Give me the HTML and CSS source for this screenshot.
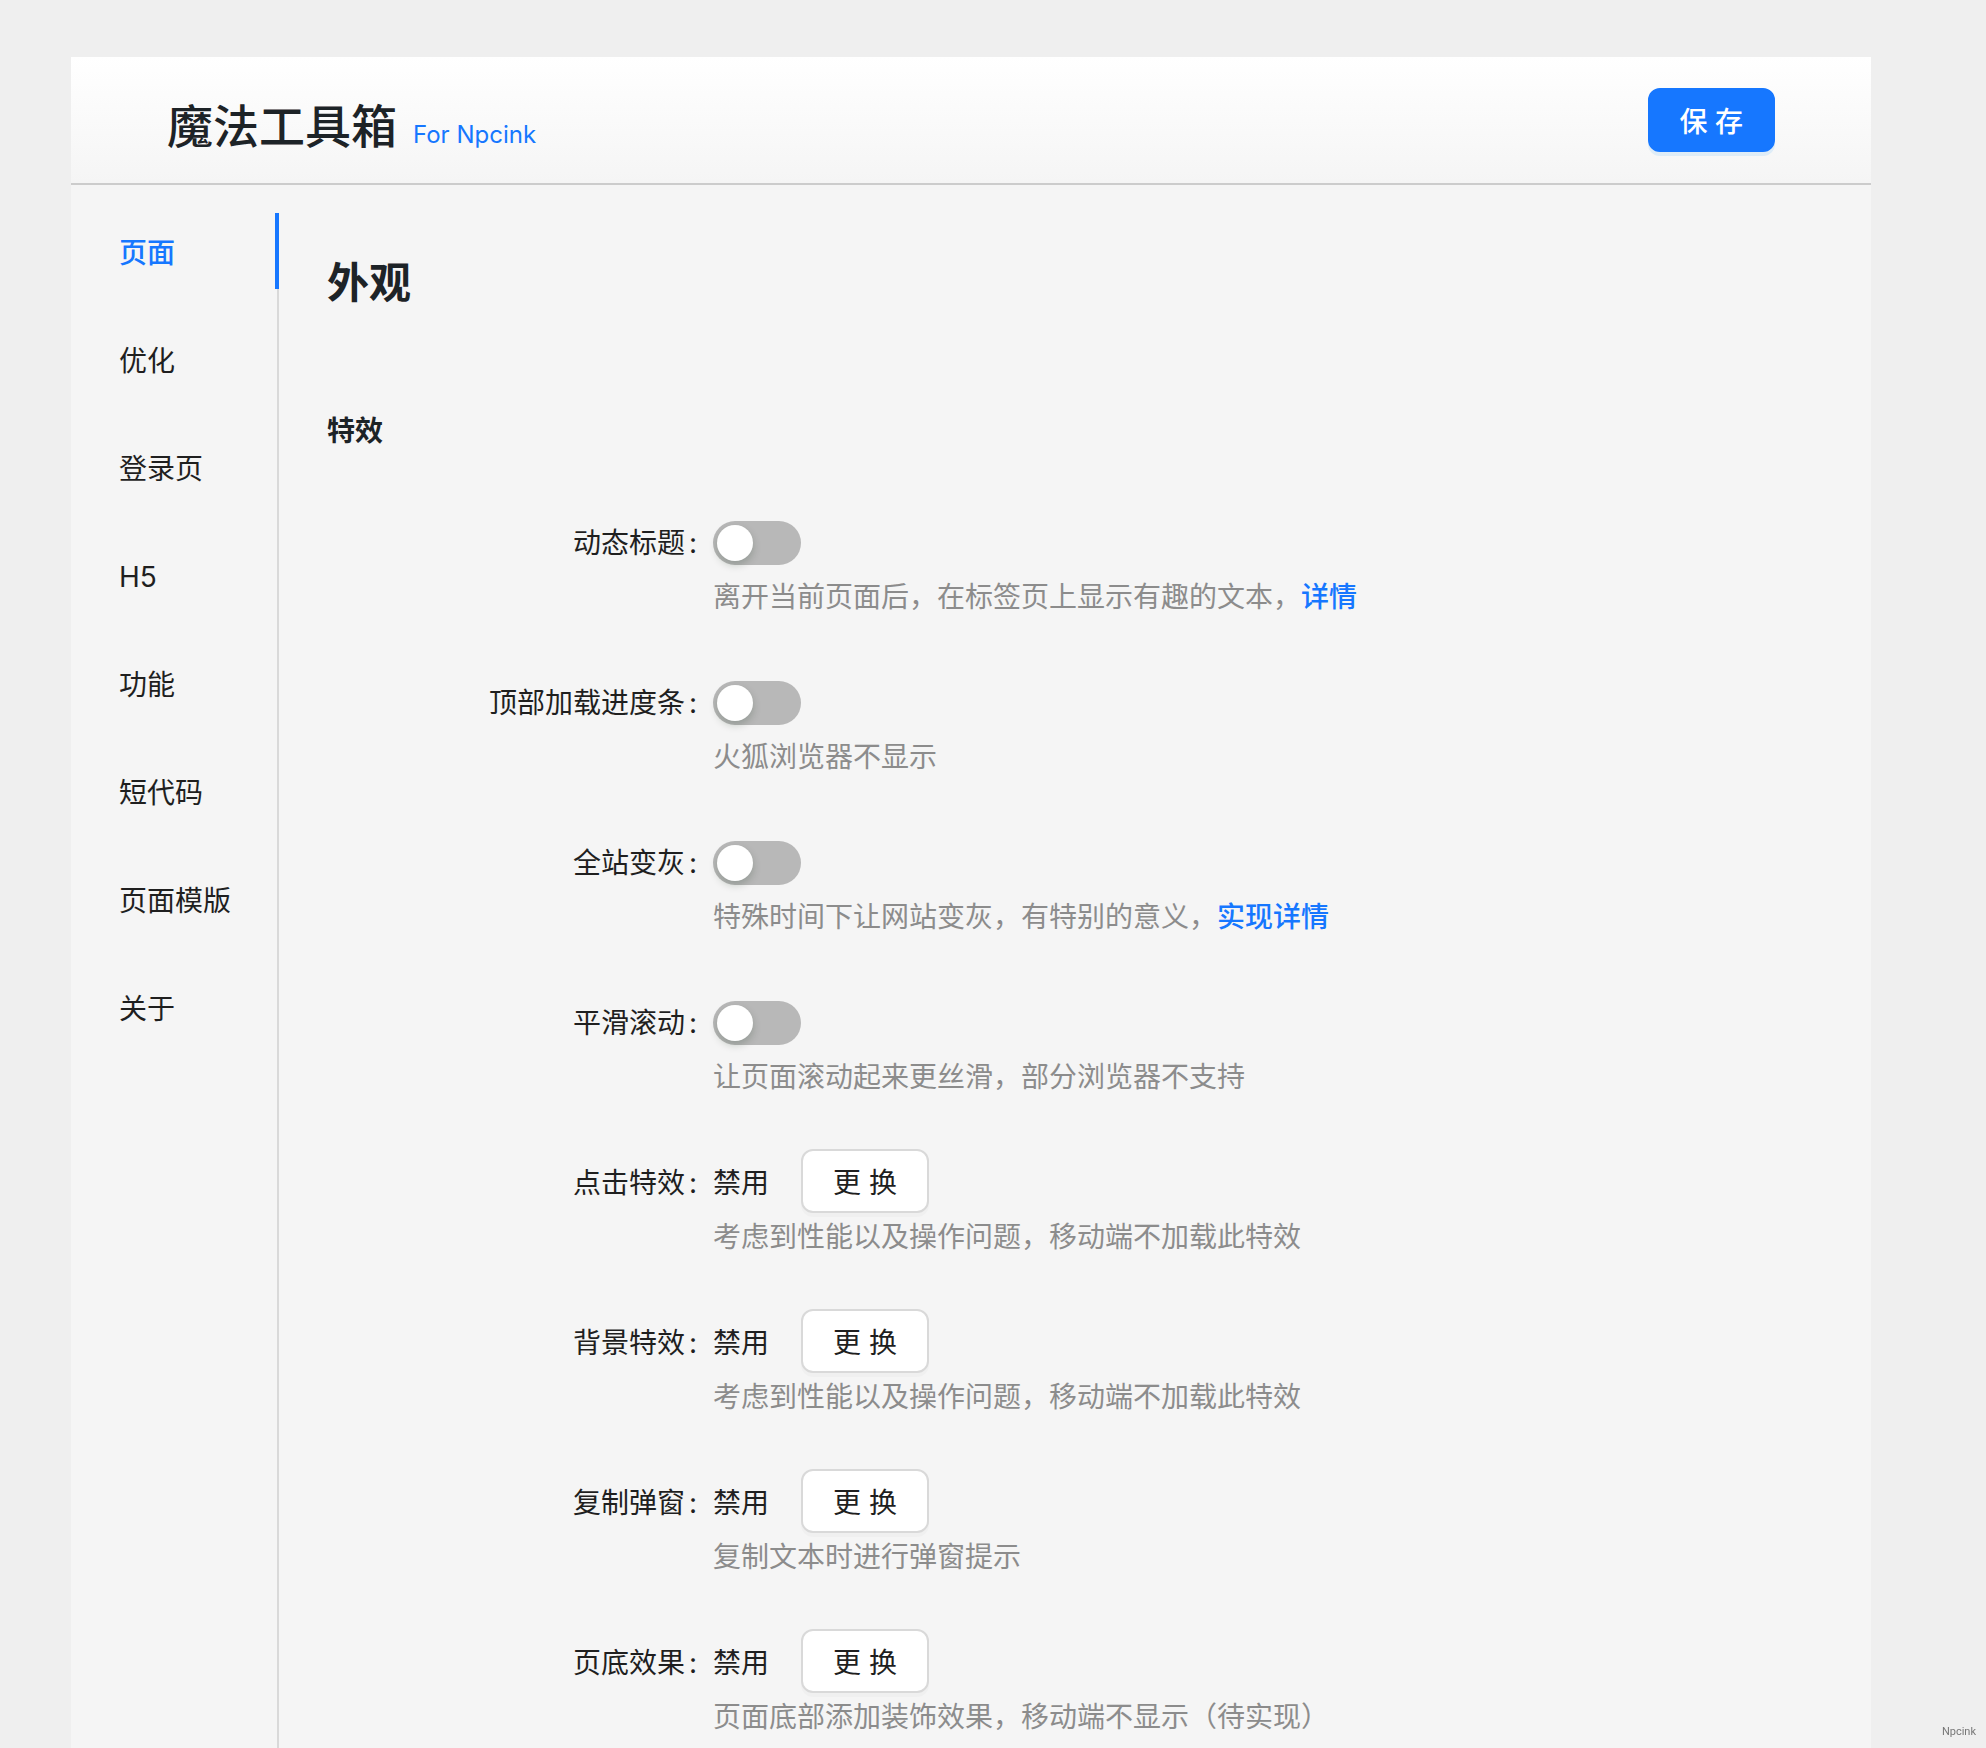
FILE: index.html
```html
<!DOCTYPE html>
<html lang="zh-CN">
	<head>
		<meta charset="UTF-8">
		<title>魔法工具箱</title>
		<link rel="stylesheet" href="styles.css">
	</head>
	<body>
		<div class="panel">
			<header class="header">
				<h1 class="title">魔法工具箱<a href="#">For Npcink</a></h1>
				<button class="btn btn-primary" type="submit" form="options">保 存</button>
			</header>

			<div class="body">
				<nav class="tabs" role="tablist">
					<button class="tab active" role="tab" aria-selected="true">页面</button>
					<button class="tab" role="tab">优化</button>
					<button class="tab" role="tab">登录页</button>
					<button class="tab" role="tab">H5</button>
					<button class="tab" role="tab">功能</button>
					<button class="tab" role="tab">短代码</button>
					<button class="tab" role="tab">页面模版</button>
					<button class="tab" role="tab">关于</button>
				</nav>

				<main class="content">
					<h2>外观</h2>
					<h3>特效</h3>

					<form class="form" id="options">
						<div class="item">
							<label class="label" for="title">动态标题</label>
							<div class="control"><input class="switch" type="checkbox" role="switch" id="title"></div>
							<p class="extra">离开当前页面后，在标签页上显示有趣的文本，<a href="#">详情</a></p>
						</div>
						<div class="item">
							<label class="label" for="loading">顶部加载进度条</label>
							<div class="control"><input class="switch" type="checkbox" role="switch" id="loading"></div>
							<p class="extra">火狐浏览器不显示</p>
						</div>
						<div class="item">
							<label class="label" for="gray">全站变灰</label>
							<div class="control"><input class="switch" type="checkbox" role="switch" id="gray"></div>
							<p class="extra">特殊时间下让网站变灰，有特别的意义，<a href="#">实现详情</a></p>
						</div>
						<div class="item">
							<label class="label" for="scroll">平滑滚动</label>
							<div class="control"><input class="switch" type="checkbox" role="switch" id="scroll"></div>
							<p class="extra">让页面滚动起来更丝滑，部分浏览器不支持</p>
						</div>
						<div class="item">
							<label class="label" for="click">点击特效</label>
							<div class="control"><span>禁用</span><button class="btn" type="button" id="click">更 换</button></div>
							<p class="extra">考虑到性能以及操作问题，移动端不加载此特效</p>
						</div>
						<div class="item">
							<label class="label" for="background">背景特效</label>
							<div class="control"><span>禁用</span><button class="btn" type="button" id="background">更 换</button></div>
							<p class="extra">考虑到性能以及操作问题，移动端不加载此特效</p>
						</div>
						<div class="item">
							<label class="label" for="copy">复制弹窗</label>
							<div class="control"><span>禁用</span><button class="btn" type="button" id="copy">更 换</button></div>
							<p class="extra">复制文本时进行弹窗提示</p>
						</div>
						<div class="item">
							<label class="label" for="bottom">页底效果</label>
							<div class="control"><span>禁用</span><button class="btn" type="button" id="bottom">更 换</button></div>
							<p class="extra">页面底部添加装饰效果，移动端不显示（待实现）</p>
						</div>
					</form>
				</main>
			</div>
		</div>

		<small class="mark">Npcink</small>
	</body>
</html>
```

FILE: styles.css
```css
* {
	box-sizing: border-box;
}
body {
	display: flex;
	flex-direction: column;
	margin: 0;
	padding: 57px 115px 0 71px;
	min-height: 100vh;
	font-family: Inter, "Noto Sans CJK SC", sans-serif;
	font-size: 28px;
	line-height: 44px;
	color: #1f1f1f;
	background-color: #efefef;
}
h1, h2, h3, p {
	margin: 0;
}
a {
	color: #1677ff;
	font-weight: 500;
	text-decoration: none;
}
.panel {
	flex: 1;
	display: flex;
	flex-direction: column;
	background-color: #f5f5f5;
}

.header {
	display: flex;
	justify-content: space-between;
	align-items: flex-start;
	height: 128px;
	padding: 31px 96px 0;
	border-bottom: 2px solid #ccc;
	background: linear-gradient(#fff, #f5f5f5);
}
.title {
	font-size: 46px;
	font-weight: 500;
	line-height: 76px;
	color: #1d2327;
}
.title a {
	margin-left: 16px;
	font-size: 24px;
	font-weight: 400;
}

.btn {
	height: 64px;
	padding: 4px 30px 0;
	font: inherit;
	color: inherit;
	border: 2px solid #d9d9d9;
	border-radius: 12px;
	background-color: #fff;
	box-shadow: 0 4px 0 rgba(0, 0, 0, 0.02);
	cursor: pointer;
}
.btn-primary {
	color: #fff;
	font-weight: 500;
	border-color: #1677ff;
	background-color: #1677ff;
	box-shadow: 0 4px 0 rgba(5, 145, 255, 0.1);
}

.body {
	flex: 1;
	display: flex;
}
.tabs {
	display: flex;
	flex-direction: column;
	gap: 32px;
	margin-top: 28px;
	box-shadow: inset -2px 0 #d9d9d9;
}
.tab {
	height: 76px;
	padding: 4px 44px 0 48px;
	font: inherit;
	color: inherit;
	text-align: left;
	border: 0;
	border-right: 4px solid transparent;
	background: none;
	cursor: pointer;
}
.tab.active {
	color: #1677ff;
	font-weight: 500;
	border-right-color: #1677ff;
}

.content {
	flex: 1;
	padding: 66px 48px 0;
	color: #1f1f1f;
}
.content h2 {
	font-size: 42px;
	line-height: 64px;
	color: #1d2327;
}
.content h3 {
	margin: 94px 0 58px;
	font-size: 28px;
	line-height: 44px;
	color: #1d2327;
}

.form {
	max-width: 1158px;
}
.item {
	display: grid;
	grid-template-columns: 1fr 2fr;
	margin-bottom: 52px;
}
.label {
	padding-right: 16px;
	line-height: 64px;
	text-align: right;
}
.label::after {
	content: ":";
	margin-left: 4px;
}
.control {
	display: flex;
	align-items: center;
	gap: 32px;
	height: 64px;
}
.control .btn {
	margin-bottom: 4px;
}
.extra {
	grid-column: 2;
	color: #8c8c8c;
}

.switch {
	appearance: none;
	width: 88px;
	height: 44px;
	margin: 0;
	padding: 4px;
	border-radius: 22px;
	background-color: #b8b8b8;
	cursor: pointer;
}
.switch::before {
	content: "";
	display: block;
	width: 36px;
	height: 36px;
	border-radius: 50%;
	background-color: #fff;
	box-shadow: 0 4px 8px rgba(0, 35, 11, 0.2);
}
.switch:checked {
	background-color: #1677ff;
}
.switch:checked::before {
	margin-left: auto;
}

.mark {
	position: fixed;
	right: 10px;
	bottom: 8px;
	font-family: Roboto, sans-serif;
	font-size: 11px;
	line-height: 16px;
	color: #777;
}
```
